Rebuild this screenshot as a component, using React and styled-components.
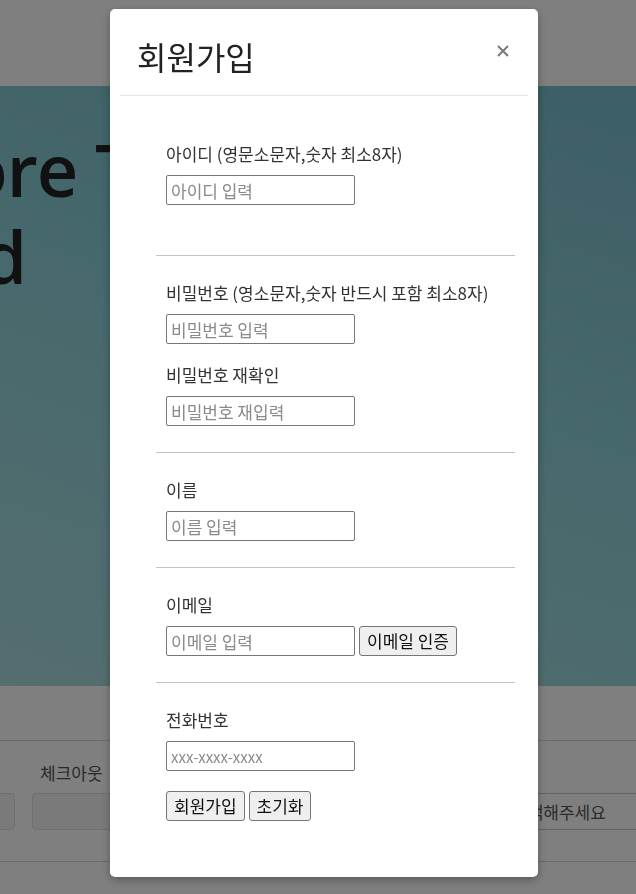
import styled, { createGlobalStyle } from 'styled-components';

const GlobalStyle = createGlobalStyle`
    html, body {
        margin: 0;
        padding: 0;
        height: 100%;
        overflow: hidden;
        font-family: "Noto Sans CJK KR", "Noto Sans", sans-serif;
        color: #333;
    }
    * {
        box-sizing: border-box;
    }
`

const Page = styled.div`
    min-height: 894px;
    background: #fff;
`

const Nav = styled.header`
    height: 86px;
    background: #fff;
`

const Hero = styled.section`
    height: 600px;
    padding-top: 40px;
    overflow: hidden;
    background: linear-gradient(200deg, #78bcca 0%, #8dd2da 45%, #aadcdf 100%);
`

const HeroTitle = styled.h1`
    margin: 0 0 0 -177px;
    font-family: "Open Sans", "Liberation Sans", sans-serif;
    font-weight: 600;
    font-size: 72px;
    line-height: 87px;
    letter-spacing: -1px;
    color: #222;
    white-space: nowrap;
`

const Booking = styled.section`
    padding-top: 54px;
    height: 192px;
`

const BookingForm = styled.div`
    border-top: 1px solid #d2d2d2;
    border-bottom: 1px solid #d2d2d2;
    padding: 20px 0 31px;
    overflow: hidden;
`

const BookingGrid = styled.div`
    display: grid;
    grid-template-columns: 200px 450px 170px;
    column-gap: 17px;
    margin-left: -185px;
`

const BookingField = styled.div`
    display: flex;
    flex-direction: column;
    gap: 8px;
`

const BookingLabel = styled.span`
    padding-left: 8px;
    font-size: 17px;
    line-height: 24px;
    height: 24px;
    color: #555;
`

const BookingBox = styled.div`
    height: 37px;
    border: 1px solid ${p => (p.$select ? '#c8c8c8' : '#dedede')};
    border-radius: 4px;
    background: ${p => (p.$select ? '#fff' : '#f5f5f5')};
    padding: 0 12px;
    font-size: 17px;
    line-height: 35px;
    color: #555;
    white-space: nowrap;
`

const Footer = styled.footer`
    height: 16px;
    background: #fff;
`

const FooterBand = styled.div`
    height: 40px;
    background: #f4f4f4;
`

const Backdrop = styled.div`
    position: fixed;
    inset: 0;
    background: rgba(0, 0, 0, 0.5);
    overflow: hidden;
`

const Dialog = styled.div`
    margin: 9px 0 0 110px;
    width: 428px;
    background: #fff;
    border-radius: 5px;
    box-shadow: 0 3px 9px rgba(0, 0, 0, 0.3);
`

const Header = styled.div`
    display: flex;
    justify-content: space-between;
    align-items: flex-start;
    margin: 0 10px;
    padding: 24px 17px 16px;
    border-bottom: 1px solid #e5e5e5;
`

const Title = styled.h2`
    margin: 0;
    font-weight: 400;
    font-size: 32px;
    line-height: 46px;
    color: #222;
`

const Close = styled.button`
    margin-top: 11px;
    margin-right: 1px;
    padding: 0;
    width: 14px;
    height: 14px;
    border: 0;
    background: none;
    display: flex;
    align-items: center;
    justify-content: center;
`

const Body = styled.div`
    padding: 21px 23px 0 46px;
`

const Section = styled.div`
    padding: 25px 10px ${p => p.$pb}px;
    border-bottom: ${p => (p.$last ? 'none' : '1px solid #c4c4c4')};
`

const Field = styled.div`
    display: flex;
    flex-direction: column;
    gap: 9px;
    & + & {
        margin-top: 19px;
    }
`

const Label = styled.label`
    font-size: 17px;
    line-height: 24px;
    height: 24px;
    color: #333;
    white-space: nowrap;
`

const Row = styled.div`
    display: flex;
    gap: 4px;
    margin-top: ${p => p.$mt || 0}px;
`

const Input = styled.input`
    width: 189px;
    height: 30px;
    padding: 1px 4px;
    border: 1px solid #767676;
    border-radius: 2px;
    font-family: "Noto Sans CJK KR", "Noto Sans", sans-serif;
    font-size: ${p => p.$small ? 15 : 17}px;
    color: #333;
    background: #fff;
    &::placeholder {
        color: #8a8a8a;
    }
`

const Button = styled.button`
    height: 30px;
    padding: 0 7px;
    border: 1px solid #767676;
    border-radius: 3px;
    background: #efefef;
    font-family: "Noto Sans CJK KR", "Noto Sans", sans-serif;
    font-size: 17px;
    line-height: 26px;
    color: #111;
`

function CloseIcon() {
    return (
        <svg width="12" height="12" viewBox="0 0 12 12">
            <path d="M1 1L11 11M11 1L1 11" stroke="#7a7a7a" strokeWidth="2" />
        </svg>
    )
}

export default function App() {
    return (
        <>
            <GlobalStyle />
            <Page>
                <Nav />
                <Hero>
                    <HeroTitle>Explore The<br />World</HeroTitle>
                </Hero>
                <Booking>
                    <BookingForm>
                        <BookingGrid>
                            <BookingField>
                                <BookingLabel>체크인</BookingLabel>
                                <BookingBox />
                            </BookingField>
                            <BookingField>
                                <BookingLabel>체크아웃</BookingLabel>
                                <BookingBox />
                            </BookingField>
                            <BookingField>
                                <BookingLabel>인원</BookingLabel>
                                <BookingBox $select>선택해주세요</BookingBox>
                            </BookingField>
                        </BookingGrid>
                    </BookingForm>
                </Booking>
                <Footer />
                <FooterBand />
            </Page>

            <Backdrop>
                <Dialog>
                    <Header>
                        <Title>회원가입</Title>
                        <Close aria-label="닫기"><CloseIcon /></Close>
                    </Header>
                    <Body>
                        {/* 아이디 */}
                        <Section $pb={50}>
                            <Field>
                                <Label>아이디 (영문소문자,숫자 최소8자)</Label>
                                <Input placeholder="아이디 입력" />
                            </Field>
                        </Section>
                        {/* 비밀번호 */}
                        <Section $pb={26}>
                            <Field>
                                <Label>비밀번호 (영소문자,숫자 반드시 포함 최소8자)</Label>
                                <Input type="password" placeholder="비밀번호 입력" />
                            </Field>
                            <Field>
                                <Label>비밀번호 재확인</Label>
                                <Input type="password" placeholder="비밀번호 재입력" />
                            </Field>
                        </Section>
                        <Section $pb={26}>
                            <Field>
                                <Label>이름</Label>
                                <Input placeholder="이름 입력" />
                            </Field>
                        </Section>
                        <Section $pb={26}>
                            <Field>
                                <Label>이메일</Label>
                                <Row>
                                    <Input placeholder="이메일 입력" />
                                    <Button>이메일 인증</Button>
                                </Row>
                            </Field>
                        </Section>
                        <Section $pb={56} $last>
                            <Field>
                                <Label>전화번호</Label>
                                <Input $small placeholder="xxx-xxxx-xxxx" />
                            </Field>
                            <Row $mt={20}>
                                <Button>회원가입</Button>
                                <Button>초기화</Button>
                            </Row>
                        </Section>
                    </Body>
                </Dialog>
            </Backdrop>
        </>
    )
}
